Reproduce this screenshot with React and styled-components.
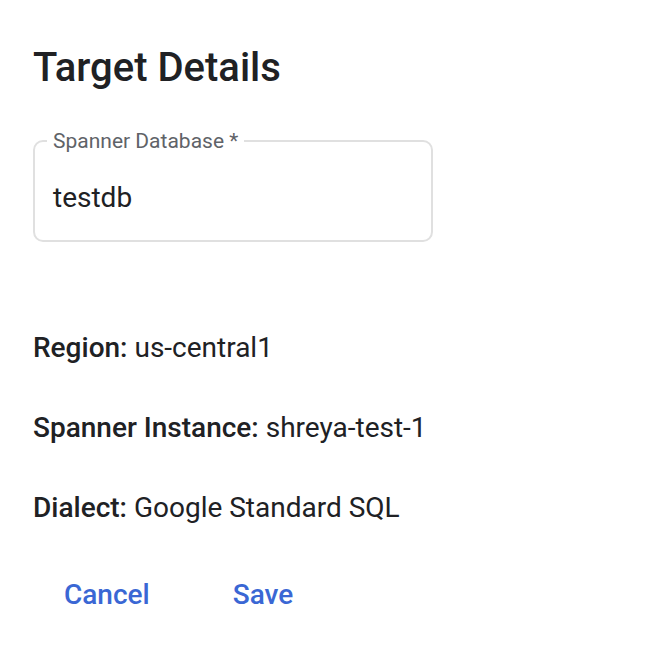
import React from "react";
import styled, { createGlobalStyle } from "styled-components";

const GlobalStyle = createGlobalStyle`
  html, body {
    margin: 0;
    padding: 0;
    background: #ffffff;
    font-family: Roboto, "Liberation Sans", Arial, sans-serif;
    color: #202124;
  }
`;

const Dialog = styled.div`
  width: 664px;
  height: 648px;
  box-sizing: border-box;
  padding: 44px 33px 0;
  display: flex;
  flex-direction: column;
`;

const Title = styled.h2`
  margin: 0;
  font-size: 40px;
  font-weight: 500;
  line-height: 48px;
  color: #202124;
`;

const Field = styled.fieldset`
  margin: 37px 0 0;
  width: 400px;
  box-sizing: border-box;
  border: 2px solid #e0e0e0;
  border-radius: 10px;
  padding: 0 18px 26px;
  min-width: 0;

  legend {
    padding: 0 6px;
    margin-left: -6px;
    font-size: 21px;
    line-height: 24px;
    color: #5f6368;
  }
`;

const Value = styled.div`
  margin-top: 29px;
  font-size: 28px;
  line-height: 32px;
  color: #202124;
`;

const Details = styled.div`
  margin-top: 90px;
  display: flex;
  flex-direction: column;
  gap: 48px;
`;

const Row = styled.div`
  font-size: 28px;
  line-height: 32px;
  color: #202124;

  b {
    font-weight: 500;
  }
`;

const Actions = styled.div`
  margin-top: 47px;
  display: flex;
  padding-left: 15px;
  gap: 51px;
`;

const Button = styled.button`
  background: none;
  border: none;
  padding: 8px 16px;
  font-family: inherit;
  font-size: 28px;
  line-height: 32px;
  font-weight: 500;
  color: #3a67d4;
  cursor: pointer;
`;

export default function App() {
  return (
    <>
      <GlobalStyle />
      <Dialog>
        <Title>Target Details</Title>
        <Field>
          <legend>Spanner Database *</legend>
          <Value>testdb</Value>
        </Field>
        <Details>
          <Row>
            <b>Region:</b> us-central1
          </Row>
          <Row>
            <b>Spanner Instance:</b> shreya-test-1
          </Row>
          <Row>
            <b>Dialect:</b> Google Standard SQL
          </Row>
        </Details>
        <Actions>
          <Button>Cancel</Button>
          <Button>Save</Button>
        </Actions>
      </Dialog>
    </>
  );
}
